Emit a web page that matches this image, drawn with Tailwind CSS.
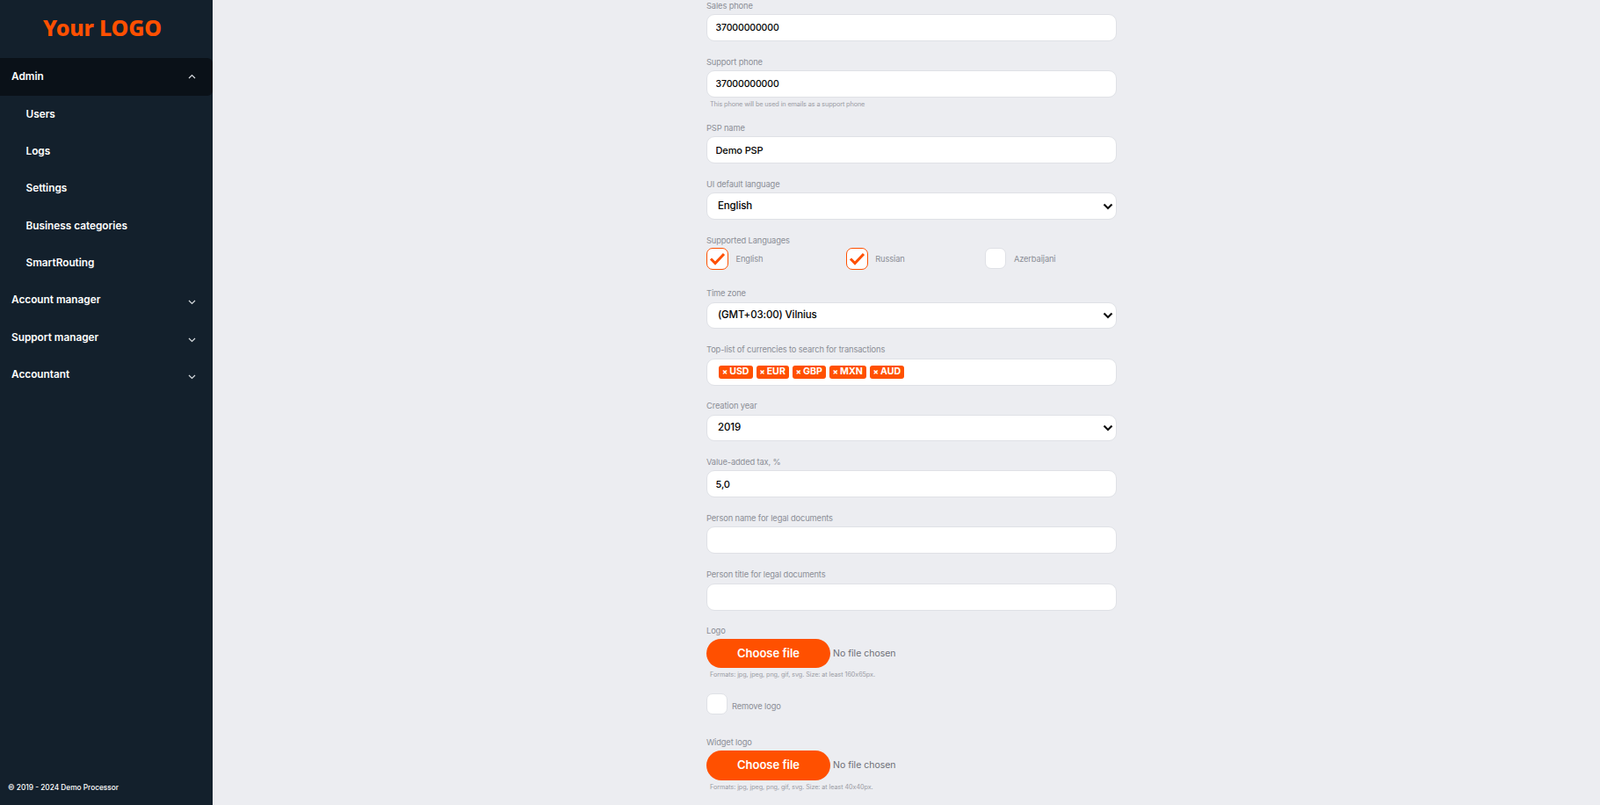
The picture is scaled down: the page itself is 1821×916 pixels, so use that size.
<!DOCTYPE html>
<html>
  <head>
    <meta charset="UTF-8" />
    <meta name="viewport" content="width=device-width, initial-scale=1.0" />
    <script src="https://cdn.jsdelivr.net/npm/@tailwindcss/browser@4"></script>
  </head>

  <body class="h-[916px] overflow-hidden bg-[#ecedf1] font-['Inter',sans-serif]">
    <div class="flex h-[916px]">
      <!-- sidebar -->
      <aside class="w-[242px] shrink-0 bg-[#13202c] text-white flex flex-col">
        <div class="h-[66px] flex items-center justify-center pr-[9px] pb-[2px] text-[#ff5000] text-[25px] font-extrabold font-['Noto_Sans',sans-serif] tracking-[-0.2px]">Your LOGO</div>
        <nav class="text-[11.8px] font-semibold">
          <div class="h-[43px] pl-[13px] pr-[19px] flex items-center justify-between bg-[#0a1118] rounded-r-md">
            <span>Admin</span>
            <svg class="w-[9px] h-[6px] -mt-[2px]" viewBox="0 0 9 6" fill="none" stroke="#d8dce0" stroke-width="1.2"><path d="M1 5l3.5-3.5L8 5" /></svg>
          </div>
          <div class="h-[42.33px] pl-[29.5px] pt-[1px] flex items-center">Users</div>
          <div class="h-[42.33px] pl-[29.5px] pt-[1px] flex items-center">Logs</div>
          <div class="h-[42.33px] pl-[29.5px] pt-[1px] flex items-center">Settings</div>
          <div class="h-[42.33px] pl-[29.5px] pt-[1px] flex items-center">Business categories</div>
          <div class="h-[42.33px] pl-[29.5px] pt-[1px] flex items-center">SmartRouting</div>
          <div class="h-[42.33px] pl-[13px] pr-[19px] pt-[1px] flex items-center justify-between">
            <span>Account manager</span>
            <svg class="w-[9px] h-[6px] mt-[4px]" viewBox="0 0 9 6" fill="none" stroke="#d8dce0" stroke-width="1.2"><path d="M1 1l3.5 3.5L8 1" /></svg>
          </div>
          <div class="h-[42.33px] pl-[13px] pr-[19px] pt-[1px] flex items-center justify-between">
            <span>Support manager</span>
            <svg class="w-[9px] h-[6px] mt-[4px]" viewBox="0 0 9 6" fill="none" stroke="#d8dce0" stroke-width="1.2"><path d="M1 1l3.5 3.5L8 1" /></svg>
          </div>
          <div class="h-[42.33px] pl-[13px] pr-[19px] pt-[1px] flex items-center justify-between">
            <span>Accountant</span>
            <svg class="w-[9px] h-[6px] mt-[4px]" viewBox="0 0 9 6" fill="none" stroke="#d8dce0" stroke-width="1.2"><path d="M1 1l3.5 3.5L8 1" /></svg>
          </div>
        </nav>
        <div class="mt-auto pl-[9px] pb-[14px] text-[8.3px] leading-[12px] font-medium">© 2019 - 2024 Demo Processor</div>
      </aside>

      <!-- main, scrolled down a bit -->
      <main class="flex-1 overflow-hidden">
        <form class="w-[467px] ml-[562px] -mt-[1.5px] text-[9.3px] tracking-[-0.12px] text-[#8b8d96]">
          <label class="block h-[17.5px] leading-[15.5px]">Sales phone</label>
          <input class="block w-full h-[31px] px-[9.5px] rounded-[9px] border border-[#dfe1e6] bg-white text-[10.5px] font-medium text-black" value="37000000000" />

          <label class="block h-[17.5px] mt-[15.5px] leading-[15.5px]">Support phone</label>
          <input class="block w-full h-[31px] px-[9.5px] rounded-[9px] border border-[#dfe1e6] bg-white text-[10.5px] font-medium text-black" value="37000000000" />
          <p class="pl-[4px] h-[13px] mt-[2px] text-[7.3px] leading-[11px] text-[#9a9ca4]">This phone will be used in emails as a support phone</p>

          <label class="block h-[17.5px] mt-[11.5px] leading-[15.5px]">PSP name</label>
          <input class="block w-full h-[31px] px-[9.5px] rounded-[9px] border border-[#dfe1e6] bg-white text-[11px] font-medium text-black" value="Demo PSP" />

          <label class="block h-[17.5px] mt-[15.5px] leading-[15.5px]">UI default language</label>
          <div class="relative">
            <select class="block w-full h-[31px] pl-[12px] rounded-[9px] border border-[#dfe1e6] bg-white text-[11.5px] font-medium text-black appearance-none"><option>English</option></select>
            <svg class="absolute right-[4px] top-[12px] w-[12px] h-[8px]" viewBox="0 0 12 8" fill="none" stroke="#111" stroke-width="2.2"><path d="M1.5 1.5L6 6l4.5-4.5" /></svg>
          </div>

          <label class="block h-[16px] mt-[15.5px] leading-[15px]">Supported Languages</label>
          <div class="grid grid-cols-[158.7px_158.7px_1fr] h-[25px]">
            <div class="flex items-center gap-[8.5px]">
              <span class="w-[25px] h-[25px] rounded-[7px] border border-[#ff5000] bg-white flex items-center justify-center">
                <svg class="w-[19px] h-[15px]" viewBox="0 0 19 15" fill="none" stroke="#ff5000" stroke-width="3"><path d="M2 7.5l5 5L17 2" /></svg>
              </span>
              <span class="pt-[1px]">English</span>
            </div>
            <div class="flex items-center gap-[8.5px]">
              <span class="w-[25px] h-[25px] rounded-[7px] border border-[#ff5000] bg-white flex items-center justify-center">
                <svg class="w-[19px] h-[15px]" viewBox="0 0 19 15" fill="none" stroke="#ff5000" stroke-width="3"><path d="M2 7.5l5 5L17 2" /></svg>
              </span>
              <span class="pt-[1px]">Russian</span>
            </div>
            <div class="flex items-center gap-[8.5px]">
              <span class="w-[24px] h-[24px] rounded-[7px] border border-[#dfe1e6] bg-white"></span>
              <span class="pt-[1px]">Azerbaijani</span>
            </div>
          </div>

          <label class="block h-[17.5px] mt-[19.5px] leading-[16px]">Time zone</label>
          <div class="relative">
            <select class="block w-full h-[30px] pl-[12px] rounded-[9px] border border-[#dfe1e6] bg-white text-[11.5px] font-medium text-black appearance-none"><option>(GMT+03:00) Vilnius</option></select>
            <svg class="absolute right-[4px] top-[11px] w-[12px] h-[8px]" viewBox="0 0 12 8" fill="none" stroke="#111" stroke-width="2.2"><path d="M1.5 1.5L6 6l4.5-4.5" /></svg>
          </div>

          <label class="block h-[17.5px] mt-[16.5px] leading-[15.5px]">Top-list of currencies to search for transactions</label>
          <div class="h-[31px] pl-[13px] rounded-[9px] border border-[#dfe1e6] bg-white flex items-center gap-[4px] text-[10.6px] tracking-normal font-bold text-white">
            <span class="h-[15px] px-[4px] rounded-[3px] bg-[#ff5000] flex items-center gap-[2px]"><span class="text-[9px] font-extrabold">×</span>USD</span>
            <span class="h-[15px] px-[4px] rounded-[3px] bg-[#ff5000] flex items-center gap-[2px]"><span class="text-[9px] font-extrabold">×</span>EUR</span>
            <span class="h-[15px] px-[4px] rounded-[3px] bg-[#ff5000] flex items-center gap-[2px]"><span class="text-[9px] font-extrabold">×</span>GBP</span>
            <span class="h-[15px] px-[4px] rounded-[3px] bg-[#ff5000] flex items-center gap-[2px]"><span class="text-[9px] font-extrabold">×</span>MXN</span>
            <span class="h-[15px] px-[4px] rounded-[3px] bg-[#ff5000] flex items-center gap-[2px]"><span class="text-[9px] font-extrabold">×</span>AUD</span>
          </div>

          <label class="block h-[17.5px] mt-[15.5px] leading-[15.5px]">Creation year</label>
          <div class="relative">
            <select class="block w-full h-[30px] pl-[12px] rounded-[9px] border border-[#dfe1e6] bg-white text-[11.5px] font-medium text-black appearance-none"><option>2019</option></select>
            <svg class="absolute right-[4px] top-[11px] w-[12px] h-[8px]" viewBox="0 0 12 8" fill="none" stroke="#111" stroke-width="2.2"><path d="M1.5 1.5L6 6l4.5-4.5" /></svg>
          </div>

          <label class="block h-[17.5px] mt-[16px] leading-[15.5px]">Value-added tax, %</label>
          <input class="block w-full h-[31px] px-[9.5px] rounded-[9px] border border-[#dfe1e6] bg-white text-[11px] font-medium text-black" value="5,0" />

          <label class="block h-[17.5px] mt-[15.5px] leading-[15.5px]">Person name for legal documents</label>
          <input class="block w-full h-[31px] px-[9.5px] rounded-[9px] border border-[#dfe1e6] bg-white" />

          <label class="block h-[17.5px] mt-[16px] leading-[15.5px]">Person title for legal documents</label>
          <input class="block w-full h-[31px] px-[9.5px] rounded-[9px] border border-[#dfe1e6] bg-white" />

          <label class="block h-[17px] mt-[15.5px] leading-[15.5px]">Logo</label>
          <div class="flex items-center gap-[3px] h-[33px]">
            <button type="button" class="w-[141px] h-[33px] rounded-full bg-[#ff5000] text-white text-[13px] tracking-normal font-semibold">Choose file</button>
            <span class="text-[10.5px] tracking-normal text-[#6c6e76]">No file chosen</span>
          </div>
          <p class="pl-[4px] h-[13px] mt-[2px] text-[7.2px] tracking-[-0.05px] leading-[11px] text-[#9a9ca4]">Formats: jpg, jpeg, png, gif, svg. Size: at least 160x65px.</p>

          <div class="flex items-center gap-[5px] h-[24px] mt-[14px]">
            <span class="w-[24px] h-[24px] rounded-[7px] border border-[#dfe1e6] bg-white"></span>
            <span class="pt-[5px]">Remove logo</span>
          </div>

          <label class="block h-[16.5px] mt-[24px] leading-[15px]">Widget logo</label>
          <div class="flex items-center gap-[3px] h-[34px]">
            <button type="button" class="w-[141px] h-[34px] rounded-full bg-[#ff5000] text-white text-[13px] tracking-normal font-semibold">Choose file</button>
            <span class="text-[10.5px] tracking-normal text-[#6c6e76]">No file chosen</span>
          </div>
          <p class="pl-[4px] h-[13px] mt-[2px] text-[7.2px] tracking-[-0.05px] leading-[11px] text-[#9a9ca4]">Formats: jpg, jpeg, png, gif, svg. Size: at least 40x40px.</p>

          <div class="h-[24px] mt-[14px]">
            <span class="block w-[24px] h-[24px] rounded-[7px] border border-[#dfe1e6] bg-white"></span>
          </div>
        </form>
      </main>
    </div>
  </body>
</html>
